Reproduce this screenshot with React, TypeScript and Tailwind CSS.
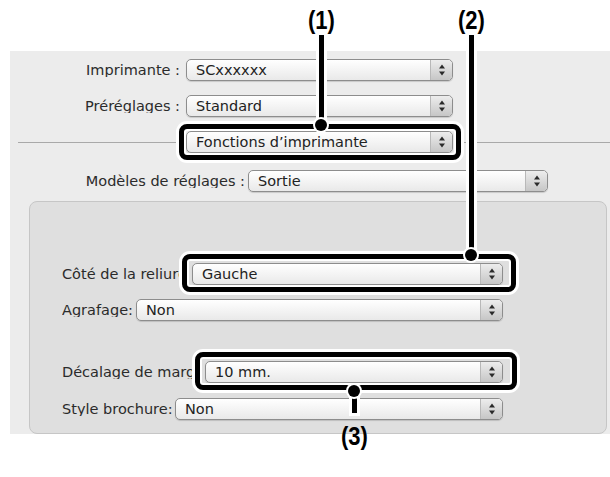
import React from 'react';

const FONT = { fontFamily: '"DejaVu Sans", "Liberation Sans", sans-serif' };
const CALLOUT_FONT = { fontFamily: '"Liberation Sans", Arial, sans-serif' };

function Stepper() {
  return (
    <div className="ml-auto flex h-full w-[22px] items-center justify-center rounded-r-[4px] border-l border-[#b8b8b8] bg-linear-to-b from-[#ededed] to-[#c6c6c6]">
      <svg width="8" height="14" viewBox="0 0 8 14">
        <path d="M4 1.5 L7 5.5 L1 5.5 Z" fill="#2a2a2a" />
        <path d="M4 12.5 L7 8.5 L1 8.5 Z" fill="#2a2a2a" />
      </svg>
    </div>
  );
}

function Select({ value, className }: { value: string; className: string }) {
  return (
    <div
      className={`flex h-[22px] shrink-0 items-center overflow-hidden rounded-[5px] border border-[#8d8d8d] bg-linear-to-b from-white to-[#e9e9e9] shadow-[0_1px_1px_rgba(0,0,0,0.15)] ${className}`}
    >
      <span className="pl-[9px] text-[14.5px] leading-none text-[#222]">{value}</span>
      <Stepper />
    </div>
  );
}

function Label({ text, className }: { text: string; className: string }) {
  return (
    <div className={`shrink-0 overflow-hidden whitespace-nowrap text-[14.5px] leading-none text-[#2b2b2b] ${className}`}>
      {text}
    </div>
  );
}

function CalloutBox({ className }: { className: string }) {
  return (
    <div
      className={`absolute rounded-[8px] border-[5px] border-black shadow-[0_0_0_3px_#fff,inset_0_0_0_2px_#fff] ${className}`}
    />
  );
}

function Dot({ className }: { className: string }) {
  return (
    <div className={`absolute h-[12px] w-[12px] rounded-full bg-black shadow-[0_0_0_2px_#fff] ${className}`} />
  );
}

function Line({ className }: { className: string }) {
  return <div className={`absolute w-[5px] bg-black shadow-[0_0_0_3px_#fff] ${className}`} />;
}

function CalloutLabel({ text, className }: { text: string; className: string }) {
  return (
    <div
      className={`absolute origin-left scale-x-[0.88] text-[25px] font-bold leading-none text-black ${className}`}
      style={CALLOUT_FONT}
    >
      {text}
    </div>
  );
}

export default function App() {
  return (
    <div className="relative h-[477px] w-[610px] overflow-hidden bg-white pt-[51px]" style={FONT}>
      <div className="ml-[10px] h-[383px] bg-[#ececec] pt-[8px]">
        <div className="flex h-[22px] items-center">
          <Label text="Imprimante :" className="w-[170px] text-right" />
          <Select value="SCxxxxxx" className="ml-[6px] w-[267px]" />
        </div>
        <div className="mt-[14px] flex h-[22px] items-center">
          <Label text="Préréglages :" className="w-[170px] text-right" />
          <Select value="Standard" className="ml-[6px] w-[267px]" />
        </div>
        <div className="mt-[14px] flex h-[22px] items-center">
          <div className="ml-[8px] h-px w-[165px] bg-[#a9a9a9]" />
          <Select value="Fonctions d’imprimante" className="ml-[3px] w-[267px]" />
          <div className="ml-[3px] h-px flex-1 bg-[#a9a9a9]" />
        </div>
        <div className="mt-[17px] flex h-[22px] items-center">
          <Label text="Modèles de réglages :" className="w-[235px] text-right" />
          <Select value="Sortie" className="ml-[3px] w-[300px]" />
        </div>

        <div className="ml-[19px] mt-[9px] h-[233px] w-[578px] rounded-[8px] border border-[#c6c6c6] bg-[#dfdfdf] pl-[32px] pt-[61px]">
          <div className="flex h-[22px] items-center">
            <Label text="Côté de la reliure" className="w-[126px]" />
            <Select value="Gauche" className="ml-[4px] w-[311px]" />
          </div>
          <div className="mt-[14px] flex h-[22px] items-center">
            <Label text="Agrafage:" className="w-[72px]" />
            <Select value="Non" className="ml-[2px] w-[367px]" />
          </div>
          <div className="mt-[40px] flex h-[22px] items-center">
            <Label text="Décalage de marge" className="w-[140px]" />
            <Select value="10 mm." className="ml-[3px] w-[298px]" />
          </div>
          <div className="mt-[15px] flex h-[22px] items-center">
            <Label text="Style brochure:" className="w-[112px]" />
            <Select value="Non" className="ml-[1px] w-[328px]" />
          </div>
        </div>
      </div>

      {/* callout (1) */}
      <CalloutLabel text="(1)" className="left-[308px] top-[8px]" />
      <Line className="left-[319px] top-[35px] h-[91px]" />
      <CalloutBox className="left-[179px] top-[124px] h-[36px] w-[282px]" />
      <Dot className="left-[315px] top-[119px]" />

      {/* callout (2) */}
      <CalloutLabel text="(2)" className="left-[458px] top-[8px]" />
      <Line className="left-[469px] top-[35px] h-[221px]" />
      <CalloutBox className="left-[182px] top-[254px] h-[38px] w-[334px]" />
      <Dot className="left-[465px] top-[249px]" />

      {/* callout (3) */}
      <CalloutBox className="left-[195px] top-[352px] h-[38px] w-[322px]" />
      <Line className="left-[352px] top-[390px] h-[23px]" />
      <Dot className="left-[348px] top-[385px]" />
      <CalloutLabel text="(3)" className="left-[341px] top-[424px]" />
    </div>
  );
}
